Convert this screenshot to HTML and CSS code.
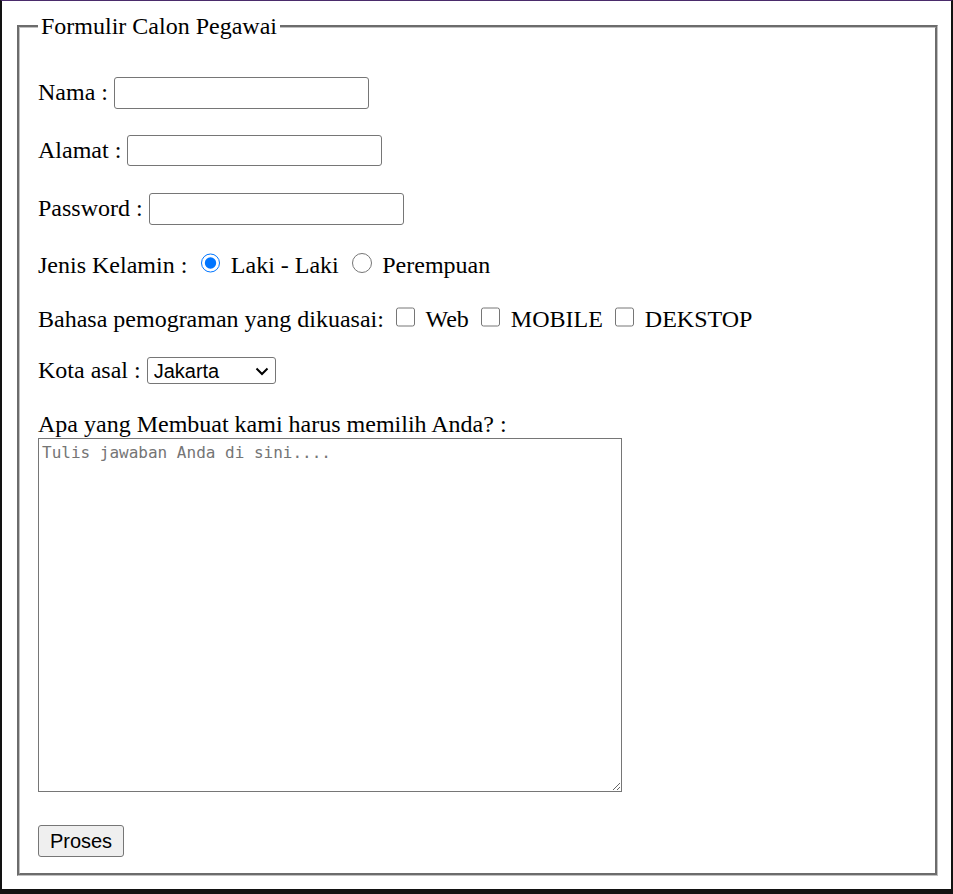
FILE: index.html
```html
<!DOCTYPE html>
<html lang="id">
<head>
<meta charset="utf-8">
<title>Formulir Calon Pegawai</title>
<link rel="stylesheet" href="styles.css">
</head>
<body>
<div class="frame">
  <form class="form">
    <fieldset class="box">
      <legend class="box-title">Formulir Calon Pegawai</legend>
      <p class="field field-first">Nama : <input type="text" class="text-input"></p>
      <p class="field field-gap2">Alamat : <input type="text" class="text-input"></p>
      <p class="field field-gap3">Password : <input type="password" class="text-input"></p>
      <p class="field">Jenis Kelamin : <input type="radio" name="jk" class="radio" checked> Laki - Laki <input type="radio" name="jk" class="radio"> Perempuan</p>
      <p class="field">Bahasa pemograman yang dikuasai: <input type="checkbox" class="check"> Web <input type="checkbox" class="check"> MOBILE <input type="checkbox" class="check"> DEKSTOP</p>
      <p class="field">Kota asal : <span class="select-wrap"><select class="select"><option>Jakarta</option><option>Bandung</option><option>Surabaya</option></select><svg class="select-arrow" width="14" height="9" viewBox="0 0 14 9"><path d="M1.5 1.5 L7 7 L12.5 1.5" fill="none" stroke="#000" stroke-width="2"/></svg></span></p>
      <p class="field field-gap3">Apa yang Membuat kami harus memilih Anda? :<br><textarea class="textarea" placeholder="Tulis jawaban Anda di sini...."></textarea></p>
      <button type="button" class="button">Proses</button>
    </fieldset>
  </form>
</div>
</body>
</html>
```
FILE: styles.css
```css
html, body {
  margin: 0;
  padding: 0;
  background: #ffffff;
}

.frame {
  box-sizing: border-box;
  height: 894px;
  padding: 12px;
  border-top: 1px solid #4a2b6b;
  border-left: 2px solid #121212;
  border-right: 2px solid #121212;
  border-bottom: 5px solid #121212;
  font-family: "Liberation Serif", "Times New Roman", serif;
  font-size: 24px;
  color: #000000;
  overflow: hidden;
}

.form {
  margin: 0;
}

.box {
  margin: 0 1px 0 3px;
  padding: 8.4px 18px 16px;
  border: 3px groove #c0c0c0;
}

.box-title {
  padding: 0 3px;
}

.field {
  margin: 24px 0;
}

.field-first {
  margin-top: 29px;
}

.field-gap2 {
  margin-top: 26px;
}

.field-gap3 {
  margin-top: 27px;
}

.text-input {
  box-sizing: border-box;
  width: 255px;
  height: 31.5px;
  padding: 1.5px 3px;
  font-family: "Liberation Sans", Arial, sans-serif;
  font-size: 20px;
  border: 1.5px solid #767676;
  border-radius: 3px;
  background: #ffffff;
  vertical-align: 1px;
}

.radio {
  width: 19.5px;
  height: 19.5px;
  margin: 4.5px 4.5px 0 7.5px;
}

.check {
  width: 19.5px;
  height: 19.5px;
  margin: 4.5px 4.5px 4.5px 6px;
}

.select-wrap {
  position: relative;
  display: inline-block;
}

.select {
  box-sizing: border-box;
  width: 129px;
  height: 27px;
  padding: 0 24px 0 6px;
  font-family: "Liberation Sans", Arial, sans-serif;
  font-size: 20px;
  color: #000000;
  background: #ffffff;
  border: 1.5px solid #767676;
  border-radius: 3px;
  appearance: none;
  -webkit-appearance: none;
}

.select-arrow {
  position: absolute;
  right: 7px;
  top: 50%;
  margin-top: -4px;
  pointer-events: none;
}

.textarea {
  box-sizing: border-box;
  width: 584px;
  height: 354px;
  padding: 4px 3px;
  border: 1.5px solid #767676;
  border-radius: 0;
  font-family: "DejaVu Sans Mono", monospace;
  font-size: 16px;
  color: #000000;
  resize: both;
}

.textarea::placeholder {
  color: #757575;
}

.button {
  box-sizing: border-box;
  width: 86px;
  height: 31.5px;
  margin-top: 3px;
  padding: 1.5px 9px;
  font-family: "Liberation Sans", Arial, sans-serif;
  font-size: 20px;
  color: #000000;
  background: #efefef;
  border: 1.5px solid #767676;
  border-radius: 3px;
}
```
